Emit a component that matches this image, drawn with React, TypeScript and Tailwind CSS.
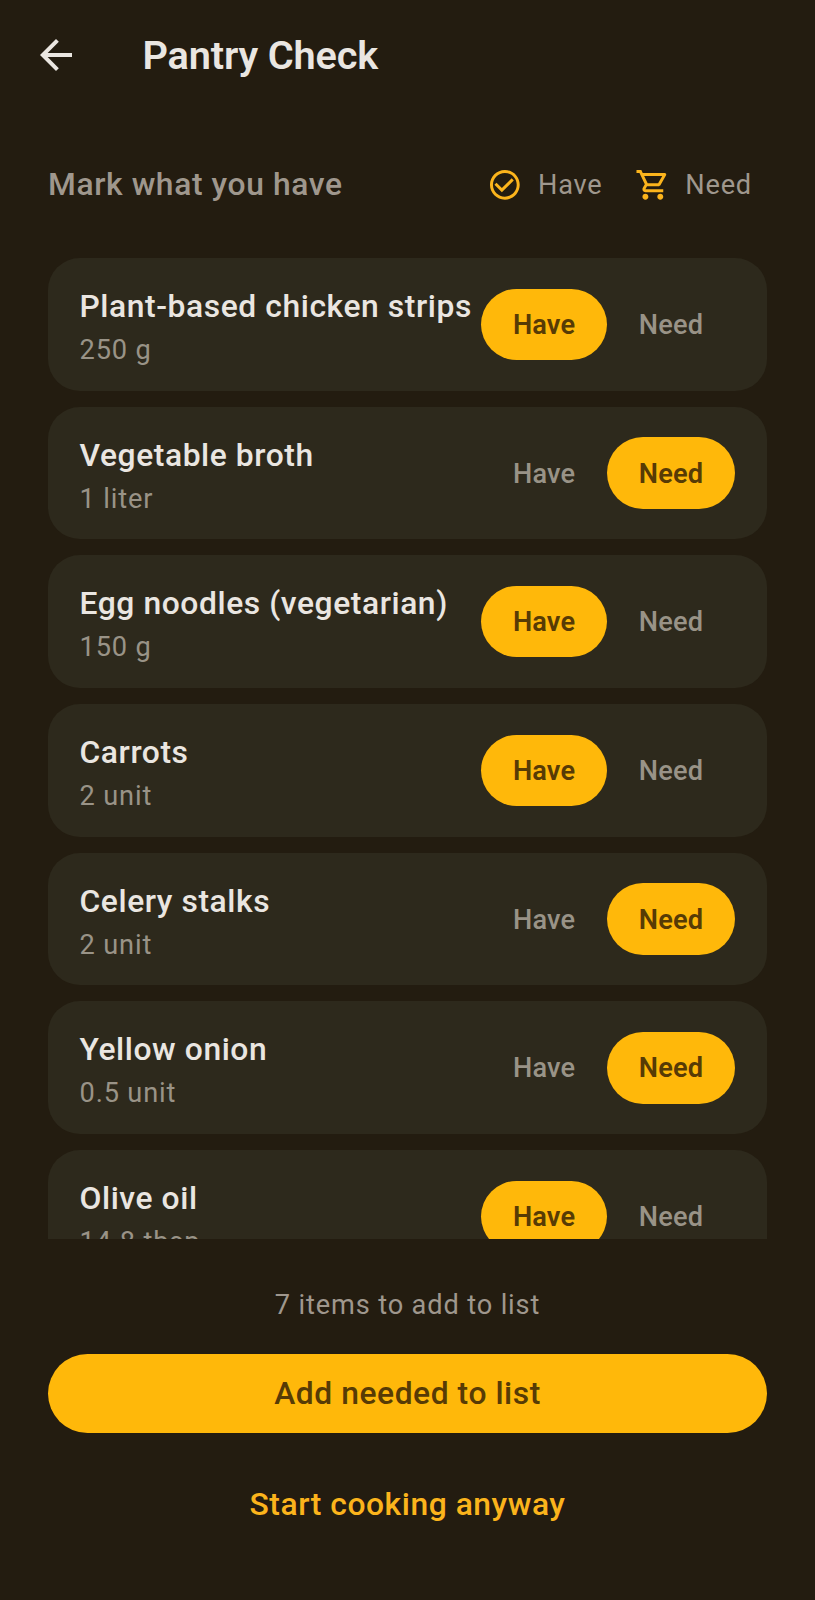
import { useState } from "react";
import { MdArrowBack, MdCheckCircleOutline, MdOutlineShoppingCart } from "react-icons/md";
import { clsx } from "clsx";

type Status = "have" | "need";

const INGREDIENTS: { name: string; amount: string; status: Status }[] = [
    { name: "Plant-based chicken strips", amount: "250 g", status: "have" },
    { name: "Vegetable broth", amount: "1 liter", status: "need" },
    { name: "Egg noodles (vegetarian)", amount: "150 g", status: "have" },
    { name: "Carrots", amount: "2 unit", status: "have" },
    { name: "Celery stalks", amount: "2 unit", status: "need" },
    { name: "Yellow onion", amount: "0.5 unit", status: "need" },
    { name: "Olive oil", amount: "14.8 tbsp", status: "have" },
];

export default function App() {
    return (
        <div className="flex h-[1600px] w-full flex-col overflow-hidden bg-[#231c10] font-['Roboto',sans-serif] text-[#eae6e1]">
            {/* App bar */}
            <header className="flex h-[111px] shrink-0 items-center pl-[31.5px]">
                <button aria-label="Back" className="pb-px">
                    <MdArrowBack className="size-12" />
                </button>
                <h1 className="ml-[63px] text-[39.7px] font-semibold tracking-[-0.15px]">Pantry Check</h1>
            </header>

            {/* Legend */}
            <div className="flex h-[147px] shrink-0 items-center justify-between pr-[63px] pl-12 text-[#9f978d]">
                <h2 className="text-[31.8px] font-medium tracking-[0.6px]">Mark what you have</h2>
                <div className="flex items-center text-[27.2px] tracking-[0.8px]">
                    <MdCheckCircleOutline className="mr-[15px] size-[35.7px] text-[#fbb41c]" />
                    <span className="mr-8 pt-0.5">Have</span>
                    <MdOutlineShoppingCart className="mr-[15px] size-[35.7px] text-[#fbb41c]" />
                    <span className="pt-0.5">Need</span>
                </div>
            </div>

            {/* Ingredients */}
            <main className="h-[981px] shrink-0 overflow-hidden px-12">
                <div className="flex flex-col gap-4">
                    {INGREDIENTS.map((item) => (
                        <IngredientRow key={item.name} {...item} />
                    ))}
                </div>
            </main>

            {/* Actions */}
            <footer className="flex flex-1 flex-col px-12 pt-[46px]">
                <p className="text-center text-[27.2px] leading-10 tracking-[0.85px] text-[#9f978d]">7 items to add to list</p>
                <button className="mt-[29px] h-[79px] rounded-full bg-[#ffb80a] text-[31.8px] font-medium tracking-[0.55px] text-[#573b05]">
                    Add needed to list
                </button>
                <button className="mt-8 h-[79px] text-[31.8px] font-medium tracking-[0.55px] text-[#fbb41c]">
                    Start cooking anyway
                </button>
            </footer>
        </div>
    );
}

function IngredientRow({ name, amount, status }: { name: string; amount: string; status: Status }) {
    const [current, setCurrent] = useState(status);
    return (
        <div className="flex h-[132.7px] shrink-0 items-center justify-between rounded-[32px] bg-[#2d291c] pr-8 pl-[31.5px]">
            <div className="flex flex-col pt-1.5 whitespace-nowrap">
                <span className="text-[31.8px] leading-[45px] font-medium tracking-[0.58px]">{name}</span>
                <span className="text-[27.2px] leading-[42px] tracking-[0.85px] text-[#999387]">{amount}</span>
            </div>
            <div className="flex">
                <StatusPill label="Have" active={current === "have"} onClick={() => setCurrent("have")} />
                <StatusPill label="Need" active={current === "need"} onClick={() => setCurrent("need")} />
            </div>
        </div>
    );
}

function StatusPill({ label, active, onClick }: { label: string; active: boolean; onClick: () => void }) {
    return (
        <button
            onClick={onClick}
            className={clsx(
                "h-[71.5px] rounded-full px-[31.8px] pt-0.5 text-[27.2px] tracking-[0.15px]",
                active ? "bg-[#ffb80a] font-semibold text-[#573b05]" : "font-medium text-[#999387]"
            )}
        >
            {label}
        </button>
    );
}
